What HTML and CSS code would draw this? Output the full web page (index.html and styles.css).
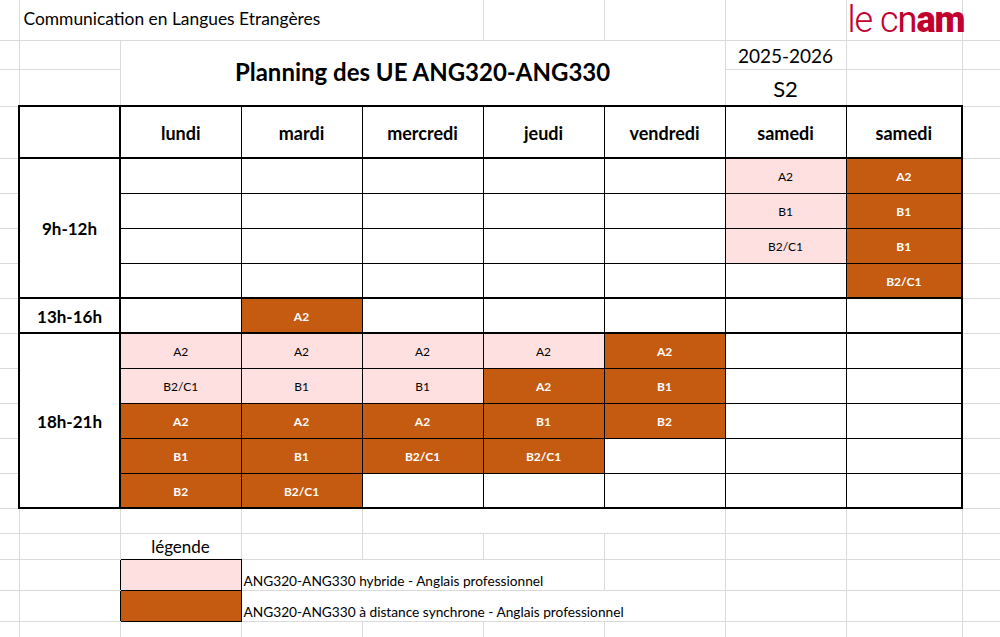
FILE: index.html
```html
<!DOCTYPE html>
<html lang="fr">
<head>
<meta charset="utf-8">
<title>Planning des UE ANG320-ANG330</title>
<link rel="stylesheet" href="styles.css">
</head>
<body>
<table class="sheet">
<colgroup>
<col class="c-a"><col class="c-b"><col class="c-d"><col class="c-d"><col class="c-d"><col class="c-d"><col class="c-d"><col class="c-d"><col class="c-i"><col class="c-j">
</colgroup>
<tbody>
<tr class="r1">
<td></td>
<td colspan="4" class="org">Communication en Langues Etrangères</td>
<td></td><td></td><td></td>
<td class="logo-cell"><span class="logo"><span class="lg-l">le c</span><span class="lg-n">n</span><span class="lg-b">am</span></span></td>
<td></td>
</tr>
<tr class="r2">
<td></td><td></td>
<td colspan="5" rowspan="2" class="title">Planning des UE ANG320-ANG330</td>
<td class="year">2025-2026</td><td></td><td></td>
</tr>
<tr class="r3">
<td></td><td></td>
<td class="sem">S2</td><td></td><td></td>
</tr>
<tr class="r-head">
<td></td>
<td class="t tb"></td>
<td class="t day">lundi</td>
<td class="t day">mardi</td>
<td class="t day">mercredi</td>
<td class="t day">jeudi</td>
<td class="t day">vendredi</td>
<td class="t day">samedi</td>
<td class="t day tl">samedi</td>
<td></td>
</tr>
<tr class="r-slot">
<td></td>
<td rowspan="4" class="t tb time">9h-12h</td>
<td class="t"></td><td class="t"></td><td class="t"></td><td class="t"></td><td class="t"></td>
<td class="t p">A2</td>
<td class="t o tl">A2</td>
<td></td>
</tr>
<tr class="r-slot">
<td></td>
<td class="t"></td><td class="t"></td><td class="t"></td><td class="t"></td><td class="t"></td>
<td class="t p">B1</td>
<td class="t o tl">B1</td>
<td></td>
</tr>
<tr class="r-slot">
<td></td>
<td class="t"></td><td class="t"></td><td class="t"></td><td class="t"></td><td class="t"></td>
<td class="t p">B2/C1</td>
<td class="t o tl">B1</td>
<td></td>
</tr>
<tr class="r-slot r-end">
<td></td>
<td class="t"></td><td class="t"></td><td class="t"></td><td class="t"></td><td class="t"></td>
<td class="t"></td>
<td class="t o tl">B2/C1</td>
<td></td>
</tr>
<tr class="r-slot r-end">
<td></td>
<td class="t tb time">13h-16h</td>
<td class="t"></td>
<td class="t o">A2</td>
<td class="t"></td><td class="t"></td><td class="t"></td><td class="t"></td>
<td class="t tl"></td>
<td></td>
</tr>
<tr class="r-slot">
<td></td>
<td rowspan="5" class="t tb time">18h-21h</td>
<td class="t p">A2</td>
<td class="t p">A2</td>
<td class="t p">A2</td>
<td class="t p">A2</td>
<td class="t o">A2</td>
<td class="t"></td>
<td class="t tl"></td>
<td></td>
</tr>
<tr class="r-slot">
<td></td>
<td class="t p">B2/C1</td>
<td class="t p">B1</td>
<td class="t p">B1</td>
<td class="t o">A2</td>
<td class="t o">B1</td>
<td class="t"></td>
<td class="t tl"></td>
<td></td>
</tr>
<tr class="r-slot">
<td></td>
<td class="t o">A2</td>
<td class="t o">A2</td>
<td class="t o">A2</td>
<td class="t o">B1</td>
<td class="t o">B2</td>
<td class="t"></td>
<td class="t tl"></td>
<td></td>
</tr>
<tr class="r-slot">
<td></td>
<td class="t o">B1</td>
<td class="t o">B1</td>
<td class="t o">B2/C1</td>
<td class="t o">B2/C1</td>
<td class="t"></td>
<td class="t"></td>
<td class="t tl"></td>
<td></td>
</tr>
<tr class="r-slot r-end">
<td></td>
<td class="t o">B2</td>
<td class="t o">B2/C1</td>
<td class="t"></td><td class="t"></td><td class="t"></td><td class="t"></td>
<td class="t tl"></td>
<td></td>
</tr>
<tr class="r15">
<td></td><td></td><td></td><td></td>
<td colspan="3"></td>
<td></td><td></td><td></td>
</tr>
<tr class="r16">
<td></td><td></td>
<td class="leg-title">légende</td>
<td></td><td></td><td></td><td></td><td></td><td></td><td></td>
</tr>
<tr class="r17">
<td></td><td class="kr"></td>
<td class="sw sw-p"></td>
<td colspan="3" class="leg-text">ANG320-ANG330 hybride - Anglais professionnel</td>
<td></td><td></td><td></td><td></td>
</tr>
<tr class="r18">
<td></td><td class="kr"></td>
<td class="sw sw-o"></td>
<td colspan="4" class="leg-text">ANG320-ANG330 à distance synchrone - Anglais professionnel</td>
<td></td><td></td><td></td>
</tr>
<tr class="r19">
<td></td><td></td><td></td><td></td><td></td><td></td><td></td><td></td><td></td><td></td>
</tr>
</tbody>
</table>
</body>
</html>
```

FILE: styles.css
```css
html, body {
  margin: 0;
  padding: 0;
  background: #ffffff;
}

body {
  font-family: "Lato", "Liberation Sans", sans-serif;
  color: #000000;
  overflow: hidden;
}

.sheet {
  border-collapse: collapse;
  table-layout: fixed;
  width: 1000px;
}

.c-a { width: 19px; }
.c-b { width: 101px; }
.c-d { width: 121px; }
.c-i { width: 116px; }
.c-j { width: 38px; }

.sheet td {
  border: 1px solid #dadada;
  padding: 3px 2px 0;
  white-space: nowrap;
  text-align: center;
  vertical-align: middle;
  font-size: 12px;
  line-height: 1.2;
}

.sheet td:first-child { border-left: none; }
.sheet tr:first-child td { border-top: none; }

.r1 { height: 40px; }
.r2 { height: 29px; }
.r3 { height: 37px; }
.r-head { height: 52px; }
.r-slot { height: 35px; }
.r15 { height: 25px; }
.r16 { height: 26px; }
.r17 { height: 31px; }
.r18 { height: 31px; }
.r19 { height: 31px; }

.org {
  text-align: left !important;
  padding: 0 0 0 4px !important;
  font-size: 17.4px !important;
}

.logo-cell {
  text-align: left !important;
  padding: 0 0 0 1px !important;
}

.logo {
  display: inline-block;
  font-family: "Roboto", "Liberation Sans", sans-serif;
  color: #c1002f;
  font-size: 36px;
  line-height: 1;
  letter-spacing: -1px;
}

.lg-l { font-weight: 300; }
.lg-n { font-weight: 400; }
.lg-b { font-weight: 900; }

.title {
  font-size: 24px !important;
  font-weight: 700;
  padding-top: 0 !important;
}

.year { font-size: 19px !important; }
.sem { font-size: 22px !important; }

.sheet td.t { border: 1px solid #000000; }
.sheet .r-head td.t { border-top: 2px solid #000000; border-bottom: 2px solid #000000; }
.sheet .r-end td.t { border-bottom: 2px solid #000000; }
.sheet td.tb { border: 2px solid #000000; }
.sheet td.tl { border-right: 2px solid #000000; }

.day {
  font-size: 18px !important;
  font-weight: 700;
}

.time {
  font-size: 17px !important;
  font-weight: 700;
}

.p { background: #ffe0e0; }
.o {
  background: #c55a11;
  color: #ffffff;
  font-weight: 700;
}

.leg-title {
  font-size: 17px !important;
  border-bottom-color: #000000 !important;
}

.sheet td.kr { border-right-color: #000000; }

.sheet td.sw { border: 1px solid #000000; }
.sw-p { background: #ffe0e0; }
.sw-o { background: #c55a11; }

.leg-text {
  text-align: left !important;
  vertical-align: bottom !important;
  padding: 0 2px 0 2px !important;
  font-size: 13.7px !important;
}
```
